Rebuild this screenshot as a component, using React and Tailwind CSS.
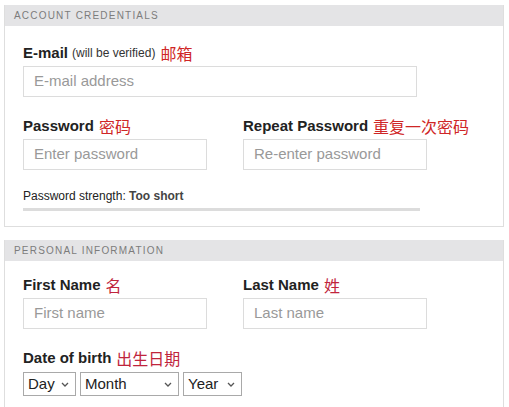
import React from 'react';

const Zh = ({ children, tone = 'text-[#cf2626]' }) => (
  <span className={`ml-[5px] font-normal text-[16px] ${tone} [font-family:'Noto_Sans_CJK_SC',sans-serif]`}>{children}</span>
);

const Label = ({ children, className = '' }) => (
  <div className={`h-[18px] flex items-center text-[15px] font-bold text-[#222] leading-[18px] whitespace-nowrap ${className}`}>
    {children}
  </div>
);

const Field = ({ placeholder, width }) => (
  <div
    className={`h-[31px] border border-[#dcdcdc] bg-white flex items-center pl-[10px] text-[15px] text-[#999] ${width}`}
  >
    {placeholder}
  </div>
);

const Chevron = () => (
  <svg width="8" height="5" viewBox="0 0 8 5" className="shrink-0">
    <path d="M1 1l3 3 3-3" fill="none" stroke="#555" strokeWidth="1.3" />
  </svg>
);

const Select = ({ label, width }) => (
  <div className={`h-[24px] border border-[#a9a9a9] flex items-center justify-between pl-[4px] pr-[6px] text-[15px] text-[#222] ${width}`}>
    <span>{label}</span>
    <Chevron />
  </div>
);

const Panel = ({ title, children, className = '' }) => (
  <section className={`border-x border-b border-[#dedede] bg-white ${className}`}>
    <div className="h-[21px] bg-[#e4e4e6] flex items-center pl-[9px] text-[10px] tracking-[1.2px] text-[#7c7c7c]">
      {title}
    </div>
    {children}
  </section>
);

export default function App() {
  return (
    <div className="w-[509px] h-[407px] overflow-hidden bg-white pl-[4px] pt-[5px] [font-family:'Liberation_Sans',Arial,sans-serif]">
      <div className="w-[500px]">
        <Panel title="ACCOUNT CREDENTIALS" className="h-[222px]">
          <div className="pl-[18px] pt-[18px]">
            <Label className="mb-[4px]">
              E-mail
              <span className="ml-[4px] font-normal text-[12px] text-[#333]">(will be verified)</span>
              <Zh>邮箱</Zh>
            </Label>
            <Field placeholder="E-mail address" width="w-[394px]" />

            <div className="flex gap-[36px] mt-[20px]">
              <div>
                <Label className="mb-[4px]">
                  Password
                  <Zh>密码</Zh>
                </Label>
                <Field placeholder="Enter password" width="w-[184px]" />
              </div>
              <div>
                <Label className="mb-[4px]">
                  Repeat Password
                  <Zh>重复一次密码</Zh>
                </Label>
                <Field placeholder="Re-enter password" width="w-[184px]" />
              </div>
            </div>

            <div className="mt-[19px] text-[12px] leading-[14px] text-[#222]">
              Password strength: <span className="font-bold text-[#444]">Too short</span>
            </div>
            <div className="mt-[5px] w-[397px] h-[3px] bg-[#dcdcdc]" />
          </div>
        </Panel>

        <Panel title="PERSONAL INFORMATION" className="mt-[13px] h-[200px]">
          <div className="pl-[18px] pt-[15px]">
            <div className="flex gap-[36px]">
              <div>
                <Label className="mb-[4px]">
                  First Name
                  <Zh tone="text-[#c0243c]">名</Zh>
                </Label>
                <Field placeholder="First name" width="w-[184px]" />
              </div>
              <div>
                <Label className="mb-[4px]">
                  Last Name
                  <Zh tone="text-[#c0243c]">姓</Zh>
                </Label>
                <Field placeholder="Last name" width="w-[184px]" />
              </div>
            </div>

            <Label className="mt-[20px] mb-[5px]">
              Date of birth
              <Zh tone="text-[#c0243c]">出生日期</Zh>
            </Label>
            <div className="flex gap-[4px]">
              <Select label="Day" width="w-[53px]" />
              <Select label="Month" width="w-[99px]" />
              <Select label="Year" width="w-[59px]" />
            </div>
          </div>
        </Panel>
      </div>
    </div>
  );
}
